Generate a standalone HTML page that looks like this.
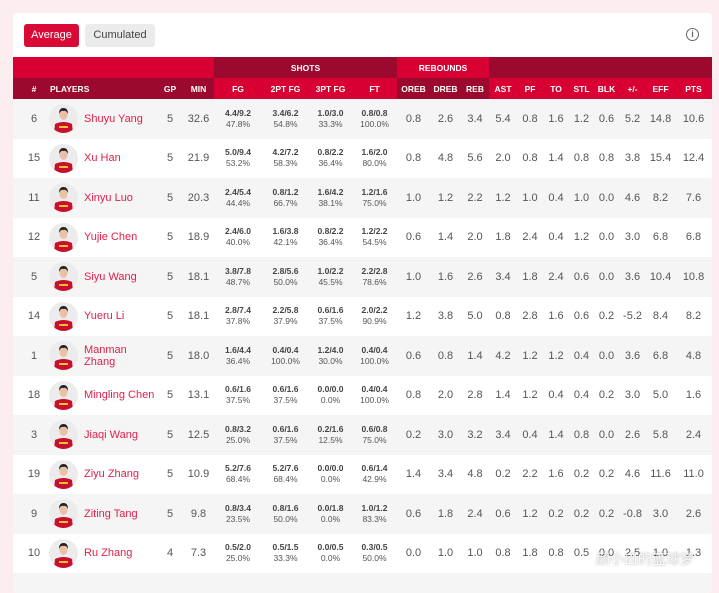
<!DOCTYPE html>
<html><head><meta charset="utf-8"><style>
*{margin:0;padding:0;box-sizing:border-box}
body{width:719px;height:579px;background:#fcedf0;font-family:"Liberation Sans",sans-serif;overflow:hidden;position:relative}
.card{position:absolute;left:13px;top:13px;width:699px;height:580px;background:#fff;border-radius:4px;overflow:hidden}
.btn{position:absolute;top:11px;height:23px;line-height:23px;font-size:11px;border-radius:3px;text-align:center}
.b1{left:11px;width:55px;background:#d90a36;color:#fff}
.b2{left:72px;width:70px;background:#ebebeb;color:#444}
.info{position:absolute;left:673px;top:15px;width:13px;height:13px;border:1.3px solid #666;border-radius:50%;font-size:9px;line-height:10px;text-align:center;color:#666;font-weight:bold}
table{position:absolute;left:0;top:44px;border-collapse:collapse;table-layout:fixed;width:699px}
th{color:#fff;font-size:8.5px;font-weight:bold;height:21px;text-align:center;padding:0}
.R{background:#d80032}.D{background:#9b0a2e}
td{height:39.5px;text-align:center;font-size:11px;color:#555;padding:0}
tbody tr:nth-child(odd) td{background:#f5f5f5}
td.s{font-size:8.5px;line-height:11px;color:#555}
td.s b{font-weight:bold;color:#444}
td.p{text-align:left;padding-left:29px;position:relative;color:#e0204a;font-size:11px;line-height:12px;white-space:nowrap}
td.p svg{position:absolute;left:-6px;top:5px}
.wm{position:absolute;left:596px;top:549px;font-family:"Noto Sans CJK SC",sans-serif;font-size:14px;color:rgba(255,255,255,.85);text-shadow:0 0 2px rgba(0,0,0,.35)}
</style></head><body>
<div class="card">
<div class="btn b1">Average</div><div class="btn b2">Cumulated</div>
<div class="info">i</div>
<table>
<colgroup><col style="width:42px"><col style="width:102px"><col style="width:26px"><col style="width:31px"><col style="width:48px"><col style="width:47px"><col style="width:43px"><col style="width:45px"><col style="width:33px"><col style="width:31px"><col style="width:28px"><col style="width:28px"><col style="width:26px"><col style="width:26px"><col style="width:25px"><col style="width:25px"><col style="width:27px"><col style="width:29px"><col style="width:37px"></colgroup>
<thead>
<tr><th class="R" colspan="4"></th><th class="D" colspan="4">SHOTS</th><th class="R" colspan="3">REBOUNDS</th><th class="D" colspan="8"></th></tr>
<tr><th class="D">#</th><th class="D" style="text-align:left;text-indent:-5px">PLAYERS</th><th class="D">GP</th><th class="D">MIN</th><th class="R">FG</th><th class="R">2PT FG</th><th class="R">3PT FG</th><th class="R">FT</th><th class="D">OREB</th><th class="D">DREB</th><th class="D">REB</th><th class="R">AST</th><th class="R">PF</th><th class="R">TO</th><th class="R">STL</th><th class="R">BLK</th><th class="R">+/-</th><th class="R">EFF</th><th class="R">PTS</th></tr>
</thead>
<tbody id="tb"></tbody>
</table>
</div>
<div class="wm">颜小白的篮球梦</div>
<script>
var d=[
["6","Shuyu Yang","5","32.6","4.4/9.2","47.8%","3.4/6.2","54.8%","1.0/3.0","33.3%","0.8/0.8","100.0%","0.8","2.6","3.4","5.4","0.8","1.6","1.2","0.6","5.2","14.8","10.6"],
["15","Xu Han","5","21.9","5.0/9.4","53.2%","4.2/7.2","58.3%","0.8/2.2","36.4%","1.6/2.0","80.0%","0.8","4.8","5.6","2.0","0.8","1.4","0.8","0.8","3.8","15.4","12.4"],
["11","Xinyu Luo","5","20.3","2.4/5.4","44.4%","0.8/1.2","66.7%","1.6/4.2","38.1%","1.2/1.6","75.0%","1.0","1.2","2.2","1.2","1.0","0.4","1.0","0.0","4.6","8.2","7.6"],
["12","Yujie Chen","5","18.9","2.4/6.0","40.0%","1.6/3.8","42.1%","0.8/2.2","36.4%","1.2/2.2","54.5%","0.6","1.4","2.0","1.8","2.4","0.4","1.2","0.0","3.0","6.8","6.8"],
["5","Siyu Wang","5","18.1","3.8/7.8","48.7%","2.8/5.6","50.0%","1.0/2.2","45.5%","2.2/2.8","78.6%","1.0","1.6","2.6","3.4","1.8","2.4","0.6","0.0","3.6","10.4","10.8"],
["14","Yueru Li","5","18.1","2.8/7.4","37.8%","2.2/5.8","37.9%","0.6/1.6","37.5%","2.0/2.2","90.9%","1.2","3.8","5.0","0.8","2.8","1.6","0.6","0.2","-5.2","8.4","8.2"],
["1","Manman<br>Zhang","5","18.0","1.6/4.4","36.4%","0.4/0.4","100.0%","1.2/4.0","30.0%","0.4/0.4","100.0%","0.6","0.8","1.4","4.2","1.2","1.2","0.4","0.0","3.6","6.8","4.8"],
["18","Mingling Chen","5","13.1","0.6/1.6","37.5%","0.6/1.6","37.5%","0.0/0.0","0.0%","0.4/0.4","100.0%","0.8","2.0","2.8","1.4","1.2","0.4","0.4","0.2","3.0","5.0","1.6"],
["3","Jiaqi Wang","5","12.5","0.8/3.2","25.0%","0.6/1.6","37.5%","0.2/1.6","12.5%","0.6/0.8","75.0%","0.2","3.0","3.2","3.4","0.4","1.4","0.8","0.0","2.6","5.8","2.4"],
["19","Ziyu Zhang","5","10.9","5.2/7.6","68.4%","5.2/7.6","68.4%","0.0/0.0","0.0%","0.6/1.4","42.9%","1.4","3.4","4.8","0.2","2.2","1.6","0.2","0.2","4.6","11.6","11.0"],
["9","Ziting Tang","5","9.8","0.8/3.4","23.5%","0.8/1.6","50.0%","0.0/1.8","0.0%","1.0/1.2","83.3%","0.6","1.8","2.4","0.6","1.2","0.2","0.2","0.2","-0.8","3.0","2.6"],
["10","Ru Zhang","4","7.3","0.5/2.0","25.0%","0.5/1.5","33.3%","0.0/0.5","0.0%","0.3/0.5","50.0%","0.0","1.0","1.0","0.8","1.8","0.8","0.5","0.0","2.5","1.0","1.3"]];
var av='<svg width="29" height="29" viewBox="0 0 29 29"><circle cx="14.5" cy="14.5" r="14.5" fill="#ececec"/><clipPath id="c"><circle cx="14.5" cy="14.5" r="14.5"/></clipPath><g clip-path="url(#c)"><path d="M5 29 L6 20 Q14.5 16 23 20 L24 29Z" fill="#c8102e"/><rect x="10" y="22" width="9" height="2" fill="#f2c230"/><ellipse cx="14.5" cy="11" rx="4" ry="5" fill="#e8c1a8"/><path d="M10 10 Q10 4 14.5 4 Q19 4 19 10 Q17 6 14.5 7 Q12 6 10 10Z" fill="#222"/></g></svg>';
var h='';d.forEach(function(r){h+='<tr><td>'+r[0]+'</td><td class="p">'+av+r[1]+'</td><td>'+r[2]+'</td><td>'+r[3]+'</td>';
for(var i=4;i<12;i+=2)h+='<td class="s"><b>'+r[i]+'</b><br>'+r[i+1]+'</td>';
for(var i=12;i<23;i++)h+='<td>'+r[i]+'</td>';h+='</tr>';});
h+='<tr><td colspan="19"></td></tr>';
document.getElementById('tb').innerHTML=h;
</script>
</body></html>
